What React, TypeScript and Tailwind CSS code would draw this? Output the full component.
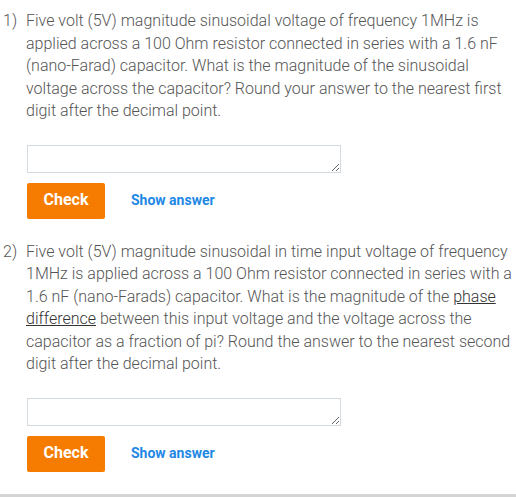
import React from "react";

function Question({
  n,
  children,
  topGap,
}: {
  n: number;
  children: React.ReactNode;
  topGap: string;
}) {
  return (
    <div className={topGap}>
      <div className="flex">
        <div className="w-[26px] shrink-0 pl-[3px]">{n})</div>
        <div className="flex-1 pr-[4px]">{children}</div>
      </div>
      <div className="pl-[27px] mt-[22px]">
        <textarea className="block w-[314px] h-[28px] border border-[#d3dae0] bg-white outline-none" />
        <div className="flex items-center mt-[10px]">
          <button className="w-[78px] h-[36px] bg-[#f57c00] text-white font-bold text-[16px] rounded-[2px]">
            Check
          </button>
          <span className="ml-[26px] text-[#1e88e5] font-bold text-[14px]">Show answer</span>
        </div>
      </div>
    </div>
  );
}

export default function App() {
  return (
    <div
      className="w-[516px] h-[497px] bg-white text-[#555] text-[16px] leading-[22.5px] font-light overflow-hidden flex flex-col"
      style={{ fontFamily: "Roboto, 'Noto Sans', sans-serif" }}
    >
      <div className="flex-1">
        <Question n={1} topGap="pt-[10px]">
          Five volt (5V) magnitude sinusoidal voltage of frequency 1MHz is applied across a 100 Ohm resistor
          connected in series with a 1.6 nF (nano-Farad) capacitor. What is the magnitude of the sinusoidal
          voltage across the capacitor? Round your answer to the nearest first digit after the decimal point.
        </Question>
        <Question n={2} topGap="pt-[22px]">
          Five volt (5V) magnitude sinusoidal in time input voltage of frequency 1MHz is applied across a 100
          Ohm resistor connected in series with a 1.6 nF (nano-Farads) capacitor. What is the magnitude of the{" "}
          <span className="underline text-[#333]">phase</span>{" "}
          <span className="underline text-[#333]">difference</span> between this input voltage and the
          voltage across the capacitor as a fraction of pi? Round the answer to the nearest second digit after
          the decimal point.
        </Question>
      </div>
      <div className="h-[3px] bg-[#d4d4d4]" />
    </div>
  );
}
